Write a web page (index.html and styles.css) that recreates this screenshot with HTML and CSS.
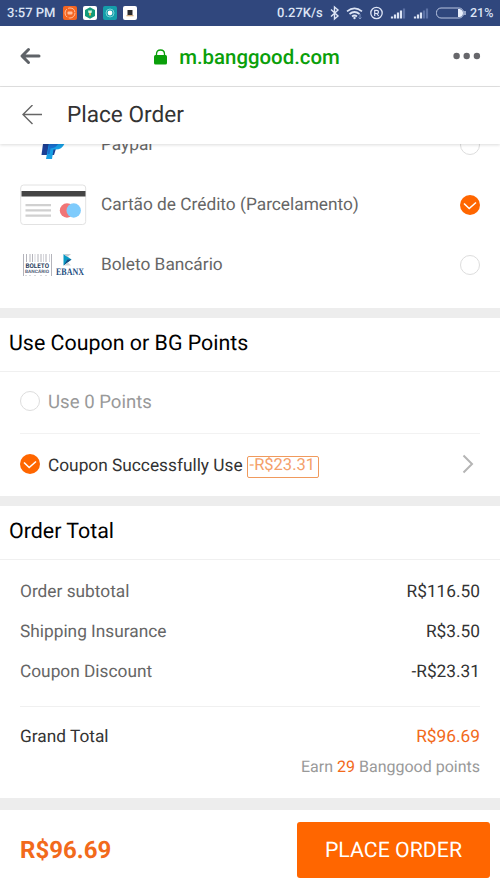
FILE: index.html
```
<!DOCTYPE html>
<html lang="en">
<head>
<meta charset="utf-8">
<meta name="viewport" content="width=device-width, initial-scale=1">
<title>Place Order</title>
<link rel="stylesheet" href="styles.css">
</head>
<body>
<div class="status">
  <span class="clock">3:57 PM</span>
  <svg class="apps" width="74" height="16" viewBox="0 0 74 16">
    <rect x="0" y="1" width="14" height="14" rx="2" fill="#f26522"/>
    <circle cx="7" cy="8" r="5" fill="none" stroke="#ffc09c" stroke-width="1" stroke-dasharray="9 1.5"/>
    <rect x="4.5" y="6.5" width="5" height="3" rx="1" fill="#ffc09c"/>
    <rect x="20" y="1" width="14" height="14" rx="2" fill="#fff"/>
    <path d="M27 2.3l5 2.7v6l-5 2.8-5-2.8V5z" fill="#129b7b"/>
    <path d="M25 5.500h4l-.5 2.500h-3z" fill="#d9f3df"/><path d="M26 8h2v2.500h-2z" fill="#e4b34c"/>
    <rect x="40" y="1" width="14" height="14" rx="2" fill="#159eaa"/>
    <circle cx="47" cy="8" r="4" fill="none" stroke="#78d2d5"/><circle cx="47" cy="8" r="2.4" fill="#fff"/>
    <rect x="60" y="1" width="14" height="14" rx="2" fill="#fff"/>
    <path d="M64.500 5h5v5h-5z" fill="#292a2e"/><path d="M63.5 10h7v1.3h-7z" fill="#d1ae84"/>
  </svg>
  <span class="speed">0.27K/s</span>
  <svg class="signals" width="136" height="16" viewBox="0 0 136 16" fill="none" stroke="#dce4f5">
    <path d="M1 4.5l7 6.500-3.500 3V2L8 5 1 11.500" stroke-width="1.4"/>
    <path d="M17 6.300q7.500-6 15 0M19.500 9q5-4 10 0M22 11.500q2.500-2 5 0" stroke-width="1.700"/>
    <circle cx="24.5" cy="13" r="1.200" fill="#dce4f5" stroke="none"/>
    <path d="M30 9v5m-1.500-1.500L30 14l1.500-1.500" stroke-width=".8" stroke="#91a6d0"/>
    <circle cx="46.500" cy="8" r="5.700" stroke-width="1.300"/>
    <path d="M44.700 11V5.300h2q1.800 0 1.800 1.600t-1.800 1.600h-2m2 0l2 2.500" stroke-width="1.200"/>
    <g stroke-width="2.200"><path d="M62 13.500v-2M65 13.500v-4M68 13.500V7.500M71 13.500V5.500"/><path d="M74 13.500V3.500" stroke="#5c72a6"/>
    <path d="M85 13.500v-2M88 13.500v-4M91 13.500V7.500"/><path d="M94 13.500V5.500M97 13.500V3.500" stroke="#5c72a6"/></g>
    <rect x="106.500" y="3" width="27" height="10" rx="4.500" stroke="#b9c5e1"/>
    <path d="M128 4h2q3 1 3 4t-3 4h-2z" fill="#e8eefb" stroke="none"/><path d="M135 6v4" stroke="#b9c5e1" stroke-width="1.500"/>
  </svg>
  <span class="battery">21%</span>
</div>
<div class="browser">
  <svg class="back" width="22" height="20" viewBox="0 0 22 20"><path d="M20 10H4M9.500 3.500L3 10l6.500 6.500" fill="none" stroke="#5f6368" stroke-width="3" stroke-linecap="round" stroke-linejoin="round"/></svg>
  <div class="address">
    <svg width="14" height="16" viewBox="0 0 14 16"><rect x="0" y="6" width="13" height="9.500" rx="1.500" fill="#0a9f0a"/><path d="M2.500 7V5q0-4 4-4t4 4v2" fill="none" stroke="#0a9f0a" stroke-width="1.300"/></svg>
    <span class="domain">m.banggood.com</span>
  </div>
  <svg class="dots" width="28" height="8" viewBox="0 0 28 8" fill="#67676b"><circle cx="3.600" cy="4" r="3.200"/><circle cx="13.700" cy="4" r="3.200"/><circle cx="23.900" cy="4" r="3.200"/></svg>
</div>
<header class="header">
  <svg width="21" height="20" viewBox="0 0 21 20"><path d="M20 9.500H1M10.500 0L1 9.500l9.500 9.500" fill="none" stroke="#666" stroke-width="1.400"/></svg>
  <h1>Place Order</h1>
</header>
<main>
  <section class="payments">
    <div class="pay">
      <svg class="logo" width="67" height="40" viewBox="0 0 67 40"><path d="M25 4h17l-8 26H21.500z" fill="#1c3f94"/><path d="M31 14h14.500q-1 10.500-10 10.500h-2l-1.500 9.500H26l3-16z" fill="#18a0e4"/><path d="M29.500 18h9q-2 5-8 5.500L29.500 29h-2z" fill="#1a6fd0"/></svg>
      <span class="label">Paypal</span><i class="radio"></i>
    </div>
    <div class="pay">
      <svg class="logo" width="67" height="42" viewBox="0 0 67 42"><rect x=".7" y="1" width="65" height="39.500" rx="3" fill="#fff" stroke="#e2e2e2"/><path d="M1.500 7h64v5.500h-64z" fill="#444"/><path d="M5.500 21.200H31M5.500 26.400H31M5.500 31.700H31" stroke="#d0d0d0" stroke-width="2.300"/><circle cx="47" cy="26.500" r="7.200" fill="#f17576"/><circle cx="53.700" cy="26.500" r="7.200" fill="#7ecbfc"/></svg>
      <span class="label">Cartão de Crédito (Parcelamento)</span>
      <svg class="check" width="20" height="20" viewBox="0 0 20 20"><circle cx="10" cy="10" r="10" fill="#ff6600"/><path d="M4 8.500L9.200 13.500 16 7.500" fill="none" stroke="#fff" stroke-width="1.600"/></svg>
    </div>
    <div class="pay">
      <svg class="logo" width="67" height="30" viewBox="0 0 67 30">
        <path d="M3.500 4v22M6.500 4v8M10 4v8M12.500 4v8M18 4v8M21 4v8M26 4v8M31.500 4v22M6 25v1M10 25v1M15 25v1M21 25v1M26 25v1" stroke="#b4b4bb" stroke-width="1"/><path d="M15 4v8M23.500 4v8M29.500 4v8" stroke="#d7d7dd" stroke-width="1"/>
        <text x="5.500" y="18" textLength="23.500" lengthAdjust="spacingAndGlyphs" class="boleto">BOLETO</text>
        <text x="5" y="23.300" textLength="24" lengthAdjust="spacingAndGlyphs" class="bancario">BANCÁRIO</text>
        <path d="M43.500 4l8 5.500-8 6z" fill="#0a9ac5"/><path d="M43.500 4h7.500l-3.500 3z" fill="#c5cbd0"/><path d="M51.500 9.500l-8 6 4-6z" fill="#164b80"/><path d="M44 15.500h7l-3-3z" fill="#d3d6d8"/>
        <text x="36" y="25" textLength="28" lengthAdjust="spacingAndGlyphs" class="ebanx">EBANX</text>
      </svg>
      <span class="label">Boleto Bancário</span><i class="radio"></i>
    </div>
  </section>
  <section class="coupon">
    <h2>Use Coupon or BG Points</h2>
    <div class="option points"><i class="radio"></i><span class="pts">Use 0 Points</span></div>
    <div class="option applied">
      <svg class="check" width="20" height="20" viewBox="0 0 20 20"><circle cx="10" cy="10" r="10" fill="#ff6600"/><path d="M4 8.500L9.200 13.500 16 7.500" fill="none" stroke="#fff" stroke-width="1.600"/></svg>
      <span class="used">Coupon Successfully Use</span><span class="tag">-R$23.31</span>
      <svg class="chevron" width="12" height="20" viewBox="0 0 12 20"><path d="M1.500 1.500L10 10l-8.500 8.500" fill="none" stroke="#b5b5b5" stroke-width="2"/></svg>
    </div>
  </section>
  <section class="total">
    <h2>Order Total</h2>
    <dl class="lines">
      <div><dt>Order subtotal</dt><dd>R$116.50</dd></div>
      <div><dt>Shipping Insurance</dt><dd>R$3.50</dd></div>
      <div><dt>Coupon Discount</dt><dd>-R$23.31</dd></div>
    </dl>
    <div class="grand"><span>Grand Total</span><span class="sum">R$96.69</span></div>
    <p class="earn">Earn <b>29</b> Banggood points</p>
  </section>
</main>
<footer>
  <strong>R$96.69</strong>
  <button type="button">PLACE ORDER</button>
</footer>
</body>
</html>
```
FILE: styles.css
```
* { box-sizing: border-box; }
body {
  margin: 0;
  width: 500px;
  height: 889px;
  overflow: hidden;
  display: flex;
  flex-direction: column;
  background: #ededed;
  color: #333;
  font: 17.3px/20px Roboto, sans-serif;
  text-rendering: geometricPrecision;
  white-space: nowrap;
}
h1, h2, p, dl, dd { margin: 0; font-weight: 400; }
svg, i { display: block; flex: none; }
.status {
  height: 26px;
  flex: none;
  display: flex;
  align-items: center;
  padding: 0 7px;
  background: #30477d;
  color: #dce4f5;
  font-size: 13px;
  font-weight: 500;
}
.status span { padding-top: 2px; }
.clock { width: 56px; }
.speed { margin-left: auto; width: 47px; }
.signals { margin: 0 4px 0 6px; }
.battery { width: 23px; font-size: 12.500px; }
.browser {
  height: 61px;
  flex: none;
  display: flex;
  align-items: center;
  justify-content: space-between;
  padding: 0 19px;
  background: #fff;
  border-bottom: 1px solid #e2e2e2;
}
.address { display: flex; align-items: center; gap: 11px; margin: 1px 0 0; }
.domain { color: #0a9f0a; font-size: 20.4px; font-weight: 500; line-height: 24px; }
.header {
  position: relative;
  z-index: 1;
  height: 57px;
  flex: none;
  display: flex;
  align-items: center;
  gap: 24px;
  padding: 0 22px 2px;
  background: #fff;
  box-shadow: 0 1px 3px rgba(0, 0, 0, .14);
}
h1 { font-size: 22.6px; line-height: 28px; }
main { flex: none; display: flex; flex-direction: column; gap: 10px; }
section { background: #fff; }
.payments { height: 164px; overflow: hidden; display: flex; flex-direction: column; }
.pay { height: 60px; flex: none; display: flex; align-items: center; padding: 0 20px; color: #666; }
.pay:first-child { margin-top: -29px; }
.logo { margin-right: 14px; overflow: visible; }
.label { flex: 1; }
.radio { width: 20px; height: 20px; border: 1px solid #ddd; border-radius: 50%; background: #fff; }
.boleto { font: 700 6.500px Roboto, sans-serif; fill: #293d5c; }
.bancario { font: 700 4.500px Roboto, sans-serif; fill: #53617a; }
.ebanx { font: 700 10px "Liberation Serif", serif; fill: #234d7f; }
h2 { height: 54px; padding: 13px 9px 0; border-bottom: 1px solid #f0f0f0; color: #000; font-size: 21.4px; line-height: 26px; }
.option { display: flex; align-items: center; margin-left: 20px; }
.points { height: 62px; margin-right: 20px; padding-bottom: 2px; border-bottom: 1px solid #f2f2f2; color: #999; }
.points .radio { margin-top: -2px; }
.pts { margin-left: 8px; font-size: 18.6px; }
.applied { height: 62px; padding: 0 26px 1px 0; }
.applied .check { margin-top: -1px; }
.used { margin: 2px 0 0 8px; }
.tag { margin: 4px 0 0 4px; width: 72px; height: 22px; padding: 0 2px; border: 1px solid #f09a5d; border-radius: 2px; color: #f4a06a; font-size: 16.500px; line-height: 18px; }
.chevron { margin: -2px 0 0 auto; }
.lines { margin: 0 20px; padding: 12px 0 15px; border-bottom: 1px solid #f0f0f0; }
.lines div { display: flex; align-items: center; justify-content: space-between; height: 40px; color: #666; }
.lines div:last-child { height: 39px; }
.lines dd { color: #333; }
.total { height: 292px; }
.grand { display: flex; justify-content: space-between; padding: 20px 20px 0; }
.grand .sum { color: #f26a1b; }
.earn { padding: 10px 20px 0; text-align: right; color: #999; font-size: 16px; }
.earn b { color: #f26a1b; font-weight: 400; }
footer {
  height: 79px;
  flex: none;
  margin-top: auto;
  display: flex;
  align-items: center;
  justify-content: space-between;
  padding: 1px 10px 0 20px;
  background: #fff;
}
footer strong { color: #f26a1b; font-size: 24px; font-weight: 700; }
button { width: 193px; height: 56px; padding: 1px 0 0; border: 0; border-radius: 3px; background: #ff6600; color: #fff; font: 21.3px/28px Roboto, sans-serif; text-rendering: geometricPrecision; }
```
